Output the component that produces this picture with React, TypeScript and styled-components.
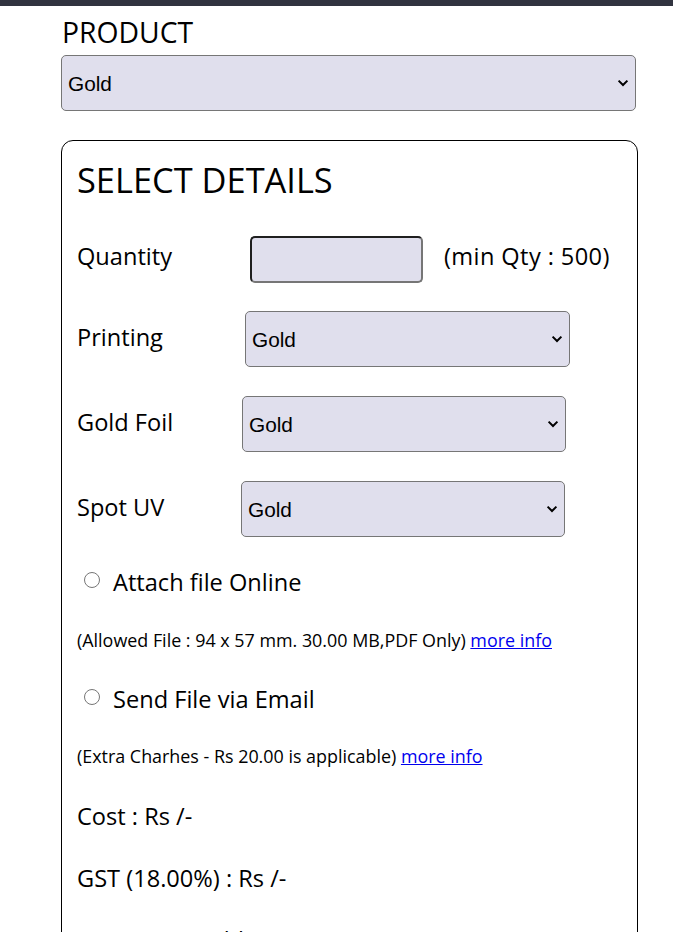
import React from "react";
import styled, { createGlobalStyle } from "styled-components";

const Global = createGlobalStyle`
  html, body { margin: 0; padding: 0; background: #ffffff; }
  body {
    font-family: "Open Sans", "Noto Sans", sans-serif;
    color: #000000;
  }
`;

const chevron =
  "url(\"data:image/svg+xml;utf8,<svg xmlns='http://www.w3.org/2000/svg' width='12' height='8' viewBox='0 0 12 8'><path d='M1.6 1.6 L6 6 L10.4 1.6' fill='none' stroke='black' stroke-width='2'/></svg>\")";

const TopBar = styled.div`
  height: 6px;
  background: #31333f;
`;

const Page = styled.main`
  padding: 0 0 40px 61px;
  width: 577px;
`;

const FieldTitle = styled.h2`
  margin: 10px 0 0 1px;
  height: 32px;
  line-height: 32px;
  font-size: 28.3px;
  font-weight: 400;
`;

const Select = styled.select<{ $w: number; $mt?: number }>`
  display: block;
  box-sizing: border-box;
  appearance: none;
  -webkit-appearance: none;
  width: ${(p) => p.$w}px;
  height: 56px;
  margin: ${(p) => p.$mt ?? 0}px 0 0 0;
  padding: 0 28px 0 6px;
  font-family: "Liberation Sans", Arial, sans-serif;
  font-size: 20.8px;
  color: #000;
  background-color: #e0dfed;
  background-image: ${chevron};
  background-repeat: no-repeat;
  background-position: right 6px center;
  background-size: 12px 8px;
  border: 1px solid #767676;
  border-radius: 5px;
  flex: none;
`;

const Card = styled.section`
  margin-top: 29px;
  box-sizing: border-box;
  width: 577px;
  border: 1px solid #000;
  border-radius: 12px;
  padding: 0 15px 40px 15px;
  display: flex;
  flex-direction: column;
`;

const CardTitle = styled.h1`
  margin: 19px 0 0;
  height: 40px;
  line-height: 40px;
  font-size: 34.4px;
  font-weight: 400;
`;

const Row = styled.div<{ $mt: number; $h: number }>`
  display: flex;
  align-items: center;
  margin-top: ${(p) => p.$mt}px;
  height: ${(p) => p.$h}px;
  font-size: 23.6px;
  white-space: nowrap;
`;

const Label = styled.span<{ $w: number; $lift: number }>`
  width: ${(p) => p.$w}px;
  margin-bottom: ${(p) => p.$lift * 2}px;
  flex: none;
`;

const QtyInput = styled.input`
  box-sizing: border-box;
  width: 173px;
  height: 47px;
  background: #e0dfed;
  border-style: solid;
  border-width: 2px;
  border-color: #1f1f1f #767676 #767676 #1f1f1f;
  border-radius: 5px;
  flex: none;
`;

const Hint = styled.span`
  margin: 0 0 8px 21px;
  letter-spacing: 0.4px;
`;

const RadioRow = styled(Row)`
  padding-left: 7px;
  gap: 13px;
`;

const RadioText = styled.span`
  margin-top: 4px;
`;

const Radio = styled.input`
  width: 16px;
  height: 16px;
  margin: 0;
  flex: none;
`;

const Info = styled.div<{ $mt: number }>`
  margin-top: ${(p) => p.$mt}px;
  height: 24px;
  line-height: 24px;
  font-size: 17.9px;
  white-space: nowrap;
`;

const MoreLink = styled.a`
  color: #0000ee;
  text-decoration: underline;
`;

const Total = styled(Row)``;

const selectRows = [
  { label: "Printing", labelW: 168, selW: 325, mt: 28 },
  { label: "Gold Foil", labelW: 165, selW: 324, mt: 29 },
  { label: "Spot UV", labelW: 164, selW: 324, mt: 29 },
];

export default function App() {
  return (
    <>
      <Global />
      <TopBar />
      <Page>
        <FieldTitle>PRODUCT</FieldTitle>
        <Select $w={575} $mt={7} defaultValue="Gold">
          <option>Gold</option>
        </Select>
        <Card>
          <CardTitle>SELECT DETAILS</CardTitle>
          <Row $mt={36} $h={47}>
            <Label $w={173} $lift={4}>Quantity</Label>
            <QtyInput type="text" />
            <Hint>(min Qty : 500)</Hint>
          </Row>
          {selectRows.map((r) => (
            <Row key={r.label} $mt={r.mt} $h={56}>
              <Label $w={r.labelW} $lift={2}>{r.label}</Label>
              <Select $w={r.selW} defaultValue="Gold">
                <option>Gold</option>
              </Select>
            </Row>
          ))}
          <RadioRow $mt={28} $h={30}>
            <Radio type="radio" name="file" />
            <RadioText>Attach file Online</RadioText>
          </RadioRow>
          <Info $mt={33}>
            (Allowed File : 94 x 57 mm. 30.00 MB,PDF Only){" "}
            <MoreLink href="#">more info</MoreLink>
          </Info>
          <RadioRow $mt={30} $h={30}>
            <Radio type="radio" name="file" />
            <RadioText>Send File via Email</RadioText>
          </RadioRow>
          <Info $mt={32}>
            (Extra Charhes - Rs 20.00 is applicable){" "}
            <MoreLink href="#">more info</MoreLink>
          </Info>
          <Total $mt={33} $h={30}>Cost : Rs /-</Total>
          <Total $mt={32} $h={30}>GST (18.00%) : Rs /-</Total>
          <Total $mt={32} $h={30}>Amount Payable : Rs /-</Total>
        </Card>
      </Page>
    </>
  );
}
